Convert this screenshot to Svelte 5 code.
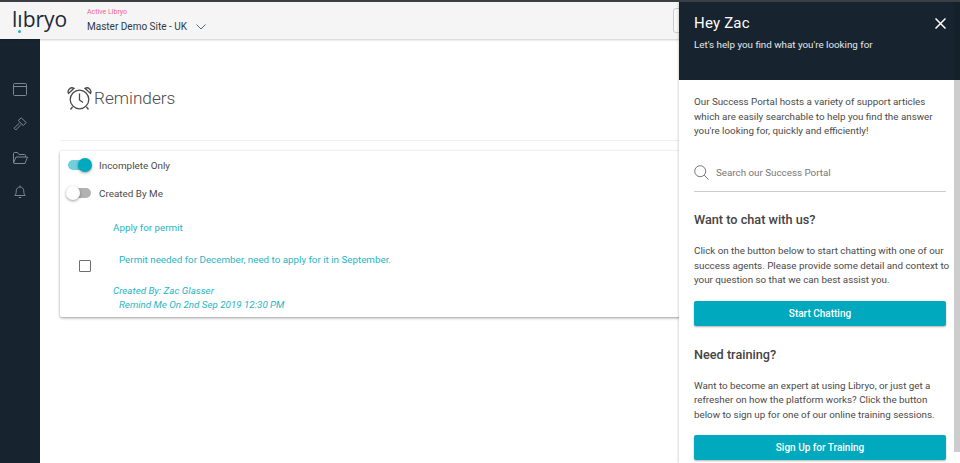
<script>
	let incompleteOnly = $state(true);
	let createdByMe = $state(false);
</script>

<div class="page">
	<header class="topbar">
		<div class="logo">l<span class="logo-i">ı</span>bryo</div>
		<div class="active">
			<div class="active-label">Active Libryo</div>
			<div class="active-name">
				Master Demo Site - UK
				<svg width="10" height="6" viewBox="0 0 10 6" fill="none" stroke="#5b6670" stroke-width="1">
					<path d="M.5.5 5 5 9.500.5" />
				</svg>
			</div>
		</div>
		<div class="top-box"></div>
	</header>

	<div class="body">
		<nav class="sidebar">
			<svg width="14" height="13" viewBox="0 0 14 13" fill="none" stroke="#7b8894">
				<rect x=".5" y=".5" width="13" height="12" rx="1" />
				<path d="M.5 3.500h13" />
			</svg>
			<svg width="14" height="14" viewBox="0 0 14 14" fill="none" stroke="#7b8894">
				<path d="M8.200.8 13.200 5.500 10.300 8.500 5.200 3.500zM6.500 6 1 11.200 2.800 13 8 7.500" />
			</svg>
			<svg width="15" height="12" viewBox="0 0 15 12" fill="none" stroke="#7b8894">
				<path d="M.5 11V1.500a1 1 0 0 1 1-1h3l1.500 2h5.500a1 1 0 0 1 1 1V5M.5 11 3 5h11.500L12 11.500H1z" />
			</svg>
			<svg width="12" height="14" viewBox="0 0 12 14" fill="none" stroke="#7b8894">
				<path d="M.8 10.500c1-1 1.400-2 1.400-4.500C2.200 3.500 4 2 6 2s3.800 1.500 3.800 4c0 2.500.4 3.500 1.400 4.500zM6 .5V2M4.800 12.500h2.400" />
			</svg>
		</nav>

		<main class="content">
			<div class="title">
				<svg width="25" height="25" viewBox="0 0 25 25" fill="none" stroke="#4a4a4a" stroke-width="1.300">
					<circle cx="12.500" cy="13.500" r="9.300" />
					<path d="M12.500 7.500v6.500l3.500 2.500M5.500 21l-2 2.500M19.500 21l2 2.500" />
					<path d="M1.500 7.500a4 4 0 0 1 5.500-5.200zM23.500 7.500a4 4 0 0 0-5.500-5.200z" />
				</svg>
				<h1>Reminders</h1>
			</div>
			<hr />
			<section class="card">
				<label class="toggle-row">
					<input type="checkbox" bind:checked={incompleteOnly} />
					<span class="switch"></span>
					Incomplete Only
				</label>
				<label class="toggle-row">
					<input type="checkbox" bind:checked={createdByMe} />
					<span class="switch"></span>
					Created By Me
				</label>
				<div class="reminder-title">Apply for permit</div>
				<div class="reminder">
					<span class="box"></span>
					<p>Permit needed for December, need to apply for it in September.</p>
				</div>
				<div class="meta">Created By: Zac Glasser</div>
				<div class="meta remind">Remind Me On 2nd Sep 2019 12:30 PM</div>
			</section>
		</main>
	</div>

	<aside class="help">
		<div class="help-head">
			<div class="hey">
				Hey Zac
				<svg width="11" height="11" viewBox="0 0 11 11" stroke="#fff" stroke-width="1.500">
					<path d="M.5.500l10 10M10.500.500l-10 10" />
				</svg>
			</div>
			<div class="sub">Let's help you find what you're looking for</div>
		</div>
		<div class="help-body">
			<p>Our Success Portal hosts a variety of support articles which are easily searchable to help you find the answer you're looking for, quickly and efficiently!</p>
			<div class="search">
				<svg width="15" height="15" viewBox="0 0 15 15" fill="none" stroke="#777">
					<circle cx="6.200" cy="6.200" r="5.500" />
					<path d="m10.200 10.200 4.300 4.300" />
				</svg>
				<span>Search our Success Portal</span>
			</div>
			<h2>Want to chat with us?</h2>
			<p>Click on the button below to start chatting with one of our success agents. Please provide some detail and context to your question so that we can best assist you.</p>
			<button>Start Chatting</button>
			<h2>Need training?</h2>
			<p>Want to become an expert at using Libryo, or just get a refresher on how the platform works? Click the button below to sign up for one of our online training sessions.</p>
			<button>Sign Up for Training</button>
		</div>
		<div class="scrollbar"></div>
	</aside>
</div>

<style>
	:global(body) {
		margin: 0;
		font-family: Roboto, "Liberation Sans", sans-serif;
		background: #fff;
	}

	.page {
		position: relative;
		width: 960px;
		height: 463px;
		overflow: hidden;
		display: flex;
		flex-direction: column;
		border-top: 2px solid #3a3f44;
		box-sizing: border-box;
	}

	.topbar {
		height: 37px;
		flex: none;
		display: flex;
		align-items: center;
		background: #f5f5f5;
		box-shadow: 0 1px 2px rgba(0, 0, 0, 0.2);
		position: relative;
		color: #2c3a47;
	}

	.logo {
		font-family: "Open Sans", sans-serif;
		font-size: 21px;
		font-weight: 500;
		line-height: 24px;
		width: 87px;
		padding-left: 12px;
		box-sizing: border-box;
		color: #1b2a38;
		margin-top: -3px;
	}

	.logo-i {
		position: relative;
	}

	.logo-i::after {
		content: "";
		position: absolute;
		left: 1px;
		bottom: 0;
		width: 3px;
		height: 3px;
		border-radius: 50%;
		background: #14b8d0;
	}

	.active-label {
		font-size: 7px;
		line-height: 9px;
		color: #f2648e;
	}

	.active-name {
		font-size: 10px;
		line-height: 14px;
		margin-top: 3px;
		display: flex;
		align-items: center;
		gap: 9px;
	}

	.top-box {
		position: absolute;
		left: 673px;
		top: 6px;
		width: 30px;
		height: 23px;
		border: 1px solid #ccc;
		border-radius: 3px;
		background: #f8f8f8;
	}

	.body {
		flex: 1;
		display: flex;
		min-height: 0;
	}

	.sidebar {
		width: 40px;
		flex: none;
		background: #17242f;
		display: flex;
		flex-direction: column;
		align-items: center;
		padding-top: 44px;
		gap: 21px;
	}

	.content {
		flex: 1;
		padding: 46px 0 0 20px;
		min-width: 0;
	}

	.title {
		display: flex;
		align-items: center;
		gap: 2px;
		margin-left: 7px;
		height: 26px;
	}

	h1 {
		margin: 0;
		font-size: 17.200px;
		font-weight: 300;
		color: #4a4a4a;
	}

	hr {
		border: 0;
		border-top: 1px solid #eee;
		margin: 29px 0 10px;
	}

	.card {
		height: 166px;
		box-sizing: border-box;
		padding: 0 0 0 8px;
		border-radius: 2px;
		box-shadow: 0 1px 3px rgba(0, 0, 0, 0.4);
		color: #1fb5c7;
		font-size: 9.800px;
	}

	.toggle-row {
		display: flex;
		align-items: center;
		height: 28px;
		gap: 8px;
		color: #4a4a4a;
		font-size: 9.900px;
	}

	.toggle-row input {
		display: none;
	}

	.switch {
		position: relative;
		width: 23px;
		height: 10px;
		border-radius: 5px;
		background: #b2b2b2;
	}

	.switch::after {
		content: "";
		position: absolute;
		left: -2px;
		top: -2px;
		width: 14px;
		height: 14px;
		border-radius: 50%;
		background: #fff;
		box-shadow: 0 1px 3px rgba(0, 0, 0, 0.4);
	}

	input:checked + .switch {
		background: #6fd0db;
	}

	input:checked + .switch::after {
		left: 10px;
		background: #00a9bd;
	}

	.reminder-title {
		margin: 14px 0 0 45px;
		line-height: 14px;
	}

	.reminder {
		display: flex;
		align-items: flex-start;
		margin: 18px 0 0 11px;
		height: 31px;
	}

	.box {
		width: 10px;
		height: 10px;
		margin-top: 7px;
		border: 1.500px solid #6e6e6e;
		border-radius: 1px;
		flex: none;
	}

	.reminder p {
		margin: 0 0 0 28px;
		line-height: 14px;
	}

	.meta {
		margin: 0 0 0 45px;
		font-style: italic;
		line-height: 14px;
	}

	.remind {
		margin-left: 51px;
	}

	.help {
		position: absolute;
		left: 679px;
		top: 0;
		width: 281px;
		height: 461px;
		background: #fff;
		box-shadow: -1px 0 2px rgba(0, 0, 0, 0.15);
		color: #4a4a4a;
	}

	.help-head {
		position: relative;
		height: 78px;
		box-sizing: border-box;
		padding: 12px 14px 0 15px;
		background: #17242f;
		color: #fff;
	}

	.help-head::after {
		content: "";
		position: absolute;
		right: 0;
		top: 0;
		bottom: 0;
		width: 6px;
		background: #14202a;
	}

	.hey {
		display: flex;
		justify-content: space-between;
		align-items: center;
		font-size: 15px;
		line-height: 18px;
		letter-spacing: 0.2px;
	}

	.sub {
		font-size: 9.800px;
		line-height: 14px;
		margin-top: 6px;
		color: #e4e7ea;
	}

	.help-body {
		padding: 15px 14px 0 15px;
		width: 252px;
	}

	.help-body p {
		margin: 0 -6px 0 0;
		font-size: 9.800px;
		line-height: 14.500px;
	}

	.search {
		display: flex;
		align-items: center;
		gap: 7px;
		height: 37px;
		margin: 15.500px 0 -1px;
		border-bottom: 1px solid #ccc;
		font-size: 9.800px;
		color: #777;
	}

	h2 {
		margin: 21px 0 16px;
		font-size: 12.700px;
		line-height: 16px;
		font-weight: 500;
		color: #444;
	}

	button {
		display: block;
		width: 100%;
		height: 25px;
		margin-top: 13px;
		border: 0;
		border-radius: 2px;
		background: #00a9bd;
		color: #fff;
		font: 500 10px Roboto, sans-serif;
		box-shadow: 0 1px 2px rgba(0, 0, 0, 0.3);
	}

	.scrollbar {
		position: absolute;
		right: 0;
		top: 78px;
		width: 6px;
		height: 372px;
		background: #cdcdcd;
	}
</style>
